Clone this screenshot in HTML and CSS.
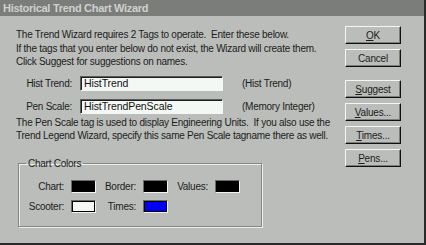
FILE: index.html
```html
<!DOCTYPE html>
<html lang="en">
<head>
    <meta charset="UTF-8">
    <meta name="viewport" content="width=device-width, initial-scale=1.0">
    <title>Historical Trend Chart Wizard</title>
    <link rel="stylesheet" href="styles.css">
</head>
<body>
    <div class="window">
        <div class="titlebar">Historical Trend Chart Wizard</div>
        <div class="content">
            <div class="main">
                <p class="intro">
                    The Trend Wizard requires 2 Tags to operate.&nbsp; Enter these below.<br>
                    If the tags that you enter below do not exist, the Wizard will create them.<br>
                    Click Suggest for suggestions on names.
                </p>
                <div class="fields">
                    <label class="field-label">Hist Trend:</label>
                    <div class="input">HistTrend</div>
                    <span class="field-type">(Hist Trend)</span>
                    <label class="field-label">Pen Scale:</label>
                    <div class="input">HistTrendPenScale</div>
                    <span class="field-type">(Memory Integer)</span>
                </div>
                <p class="note">
                    The Pen Scale tag is used to display Engineering Units.&nbsp; If you also use the<br>
                    Trend Legend Wizard, specify this same Pen Scale tagname there as well.
                </p>
                <fieldset class="colors">
                    <legend>Chart Colors</legend>
                    <div class="color-grid">
                        <span class="color-label">Chart:</span>
                        <span class="swatch black"></span>
                        <span class="color-label">Border:</span>
                        <span class="swatch black"></span>
                        <span class="color-label">Values:</span>
                        <span class="swatch black"></span>
                        <span class="color-label">Scooter:</span>
                        <span class="swatch white"></span>
                        <span class="color-label">Times:</span>
                        <span class="swatch blue"></span>
                    </div>
                </fieldset>
            </div>
            <div class="buttons">
                <button class="btn default"><u>O</u>K</button>
                <button class="btn">Cancel</button>
                <button class="btn gap"><u>S</u>uggest</button>
                <button class="btn"><u>V</u>alues...</button>
                <button class="btn"><u>T</u>imes...</button>
                <button class="btn"><u>P</u>ens...</button>
            </div>
        </div>
    </div>
</body>
</html>
```

FILE: styles.css
```css
* {
    margin: 0;
    padding: 0;
    box-sizing: border-box;
}
body {
    font-family: "Liberation Sans", Arial, sans-serif;
    font-size: 10px;
    letter-spacing: -0.25px;
    color: #1c1c1c;
    background: #babdb9;
}
.window {
    width: 426px;
    height: 245px;
    background: #babdb9;
    border-right: 2px solid #2a2a2a;
    border-bottom: 2px solid #2a2a2a;
    display: flex;
    flex-direction: column;
}
.titlebar {
    height: 16px;
    flex-shrink: 0;
    background: #7b7d7b;
    color: #cfd1cf;
    font-weight: bold;
    font-size: 11px;
    letter-spacing: -0.3px;
    line-height: 16px;
    padding-left: 3px;
}
.content {
    display: flex;
    flex: 1;
}
.main {
    width: 345px;
    padding-left: 16px;
    white-space: nowrap;
}
.intro {
    margin-top: 12px;
    line-height: 13.5px;
}
.fields {
    display: grid;
    grid-template-columns: 56px 143px auto;
    column-gap: 8px;
    row-gap: 8px;
    align-items: center;
    margin-top: 7px;
}
.field-label {
    text-align: right;
}
.field-type {
    padding-left: 11px;
}
.input {
    height: 15px;
    background: #f4f8f4;
    border: 1px solid;
    border-color: #5a5a5a #f4f8f4 #f4f8f4 #5a5a5a;
    box-shadow: inset 1px 1px 0 #1e1e1e;
    padding-left: 3px;
    font-size: 10.5px;
    letter-spacing: -0.1px;
    line-height: 13px;
    color: #111;
}
.note {
    margin-top: 2px;
    line-height: 13.5px;
}
.colors {
    width: 244px;
    height: 69px;
    margin-top: 15px;
    margin-left: 2px;
    border: 1px solid #858785;
    box-shadow: 1px 1px 0 #eef0ee, inset 1px 1px 0 #eef0ee;
    padding: 11px 0 0 2px;
}
.colors legend {
    margin-left: 5px;
    padding: 0 2px;
}
.color-grid {
    display: grid;
    grid-template-columns: 43px 25px 33px 25px 33px 25px;
    column-gap: 7px;
    row-gap: 7px;
    align-items: center;
}
.color-label {
    text-align: right;
}
.swatch {
    height: 13px;
    border: 1px solid;
    border-color: #6a6a6a #f0f2f0 #f0f2f0 #6a6a6a;
}
.black {
    background: #000;
}
.blue {
    background: #0000f8;
    box-shadow: inset 0 0 0 1px #000;
}
.white {
    background: #f4f8f4;
    box-shadow: inset 1px 1px 0 #000, inset -1px -1px 0 #000;
}
.buttons {
    display: flex;
    flex-direction: column;
    padding-top: 10px;
    gap: 5px;
}
.btn {
    width: 56px;
    height: 18px;
    font-family: "Liberation Sans", Arial, sans-serif;
    font-size: 10px;
    letter-spacing: -0.2px;
    color: #1c1c1c;
    background: #babdb9;
    border: 1px solid;
    border-color: #f4f6f4 #101010 #101010 #f4f6f4;
    box-shadow: inset -1px -1px 0 #7b7d7b;
    cursor: pointer;
}
.btn.gap {
    margin-top: 8px;
}
```
